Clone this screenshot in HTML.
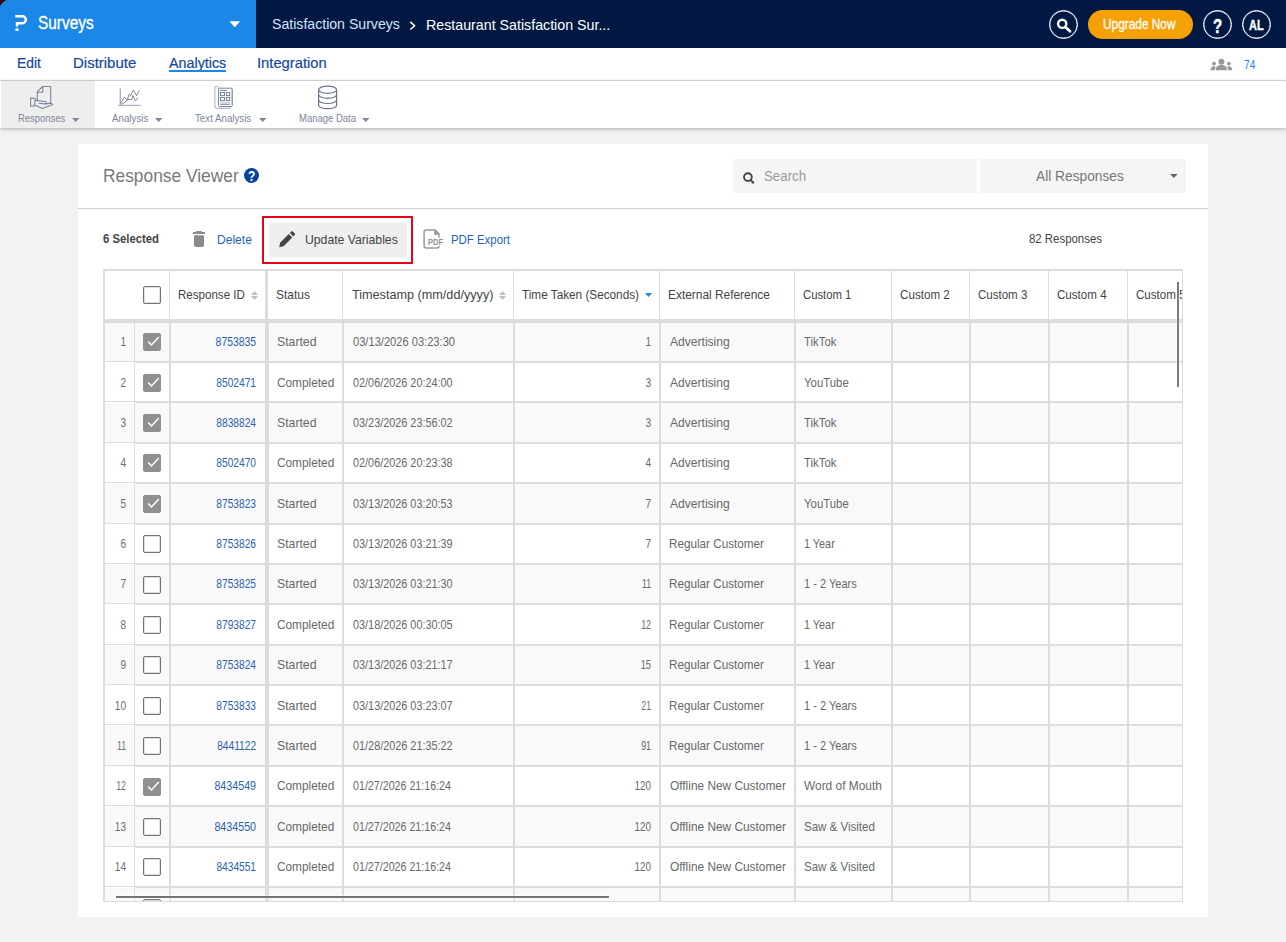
<!DOCTYPE html>
<html lang="en"><head><meta charset="utf-8"><title>Response Viewer - Surveys</title>
<style>
*{box-sizing:border-box;margin:0;padding:0}
html{background:#2b0716}
body{width:1286px;height:942px;overflow:hidden;position:relative;background:#f2f2f2;font-family:"Liberation Sans",sans-serif;font-size:13px;color:#444;border-top-left-radius:9px}
.t{position:absolute;white-space:nowrap;line-height:normal;transform-origin:0 50%;display:block}
.abs{position:absolute}
#nav{position:absolute;left:0;top:0;width:1286px;height:48px;background:#011842;border-top-left-radius:9px}
#brand{position:absolute;left:0;top:0;width:256px;height:48px;background:#1b87e6;border-top-left-radius:9px}
.circ{position:absolute;top:10px;width:29px;height:29px;border:1px solid #fff;border-radius:50%;box-shadow:inset 0 0 0 .4px rgba(255,255,255,.9)}
#upg{position:absolute;left:1088px;top:10px;width:105px;height:29px;border-radius:15px;background:#f5a105}
#tabs{position:absolute;left:0;top:48px;width:1286px;height:33px;background:#fff;border-bottom:1px solid #dcdcdc}
#tools{position:absolute;left:0;top:81px;width:1286px;height:47px;background:#fff;box-shadow:0 1px 4px rgba(0,0,0,.28)}
#tools .act{position:absolute;left:1px;top:0;width:94px;height:47px;background:#eee}
.caret{position:absolute;width:0;height:0;border-left:4px solid transparent;border-right:4px solid transparent;border-top:4px solid #7b8599}
#card{position:absolute;left:78px;top:144px;width:1130px;height:773px;background:#fff}
#hr{position:absolute;left:78px;top:208px;width:1130px;height:1px;background:#cfcfcf}
#search{position:absolute;left:733px;top:159px;width:244px;height:34px;background:#f5f5f5}
#filter{position:absolute;left:980px;top:159px;width:206px;height:34px;background:#f5f5f5;border-radius:0 4px 4px 0}
#redbox{position:absolute;left:262px;top:216px;width:151px;height:48px;border:2px solid #e3051b}
#updbtn{position:absolute;left:269px;top:223px;width:138px;height:34px;background:#efefef;border-radius:3px}
/* table */
#grid{position:absolute;left:103px;top:269px;width:1080px;height:633px;overflow:hidden;background:#fff;border:2px solid #dcdcdc;border-right-width:1px;border-bottom-width:1px}
#ghead{position:absolute;left:0;top:0;width:1300px;height:52px;border-bottom:4px solid #dcdcdc;background:#fff}
.hc{position:absolute;top:0;height:100%;border-right:1px solid #dcdcdc}
.row{position:absolute;left:0;width:1300px;height:40.385px}
.row.odd .c{background:#f9f9f9}
.c{position:absolute;top:0;height:100%;border-right:2px solid #dcdcdc;border-bottom:2px solid #dcdcdc;border-top:0 solid #dcdcdc;background:#fff;color:#686868;font-size:12.6px}
.c .t{top:50%;margin-top:-6.7px}
.c .r{transform-origin:100% 50%}
.cb{position:absolute;left:143px;width:18px;height:18px;border:1px solid #727272;border-radius:2px;background:#fff;box-shadow:inset 0 0 0 .5px #c4c4c4}
.cb.on{background:#909090;border-color:#909090}
.cb.on{box-shadow:none}
.cb.on svg{position:absolute;left:-1px;top:-1px}
.lnk{color:#2a62ad}
.sort{position:absolute;width:7px;height:9px}
</style></head><body>

<div id="nav"><div id="brand"></div>
<svg class="abs" style="left:12px;top:12px" width="20" height="22" viewBox="12 12 20 22"><path d="M15.2 16.3H22.4A3.45 3.45 0 0 1 22.4 23.2H17V26.6" fill="none" stroke="#fff" stroke-width="2.5"/><rect x="15.4" y="28.3" width="3.1" height="2.7" rx=".6" fill="#fff"/></svg>
<svg class="abs" style="left:229px;top:21px" width="12" height="7" viewBox="0 0 12 7"><path d="M0.3 0.2H11.2L5.75 6.2Z" fill="#fff"/></svg>
<svg class="abs" style="left:408px;top:20px" width="10" height="12" viewBox="0 0 10 12"><path d="M2.3 1.9L6.6 5.7L2.3 9.5" fill="none" stroke="#fff" stroke-width="1.5"/></svg>
<div class="circ" style="left:1049px"><svg class="abs" style="left:-1px;top:-1px" width="30" height="30" viewBox="0 0 30 30"><circle cx="13.2" cy="13.8" r="4.1" fill="none" stroke="#fff" stroke-width="2.4"/><path d="M16.3 17L21 21.3" stroke="#fff" stroke-width="2.8" stroke-linecap="round"/></svg></div>
<div id="upg"></div>
<div class="circ" style="left:1203px"></div><div class="circ" style="left:1242px"></div>
<span class="t" style="left:37.90px;top:12.61px;font-size:18px;color:#fff;transform:scaleX(0.8551);-webkit-text-stroke:.35px #fff;">Surveys</span>
<span class="t" style="left:271.90px;top:15.32px;font-size:15px;color:#d3e4fb;transform:scaleX(0.9410);">Satisfaction Surveys</span>
<span class="t" style="left:425.95px;top:16.02px;font-size:15px;color:#fff;transform:scaleX(0.9485);">Restaurant Satisfaction Sur...</span>
<span class="t" style="left:1103.15px;top:15.73px;font-size:14px;color:#fff;transform:scaleX(0.8469);-webkit-text-stroke:.3px #fff;">Upgrade Now</span>
<span class="t" style="left:1213.10px;top:14.29px;font-size:21px;color:#fff;transform:scaleX(0.7167);font-weight:700;-webkit-text-stroke:.5px #fff;">?</span>
<span class="t" style="left:1248.90px;top:16.93px;font-size:14px;color:#fff;transform:scaleX(0.7797);font-weight:700;-webkit-text-stroke:.4px #fff;">AL</span>
</div>
<div id="tabs">
<span class="t" style="left:16.78px;top:6.33px;font-size:15px;color:#15489d;transform:scaleX(0.9229);-webkit-text-stroke:.2px #15489d;">Edit</span>
<span class="t" style="left:73.30px;top:6.33px;font-size:15px;color:#15489d;transform:scaleX(0.9982);-webkit-text-stroke:.2px #15489d;">Distribute</span>
<span class="t" style="left:168.50px;top:6.33px;font-size:15px;color:#15489d;transform:scaleX(0.9543);-webkit-text-stroke:.2px #15489d;">Analytics</span>
<span class="t" style="left:257.22px;top:6.33px;font-size:15px;color:#15489d;transform:scaleX(0.9836);-webkit-text-stroke:.2px #15489d;">Integration</span>
<span class="t" style="left:1243.70px;top:9.14px;font-size:13px;color:#2285ee;transform:scaleX(0.7800);">74</span>
<div class="abs" style="left:168.5px;top:22px;width:57px;height:2px;background:#1b87e6"></div>
<svg class="abs" style="left:1210px;top:10px" width="23" height="13" viewBox="0 0 23 13"><g fill="#999"><circle cx="11.4" cy="3.7" r="3"/><path d="M5.6 12.2c0-3.6 2.4-5.2 5.8-5.2s5.8 1.6 5.8 5.2z"/><circle cx="3.9" cy="5.6" r="1.9"/><path d="M0.6 12.2c0-2.6 1.2-3.9 3.3-3.9c.8 0 1.5.2 2 .6c-.9 1-1.3 2.1-1.3 3.3z"/><circle cx="18.9" cy="5.6" r="1.9"/><path d="M22.2 12.2c0-2.6-1.2-3.9-3.3-3.9c-.8 0-1.5.2-2 .6c.9 1 1.3 2.1 1.3 3.3z"/></g></svg>
</div>
<div id="tools"><div class="act"></div>
<span class="t" style="left:17.70px;top:31.05px;font-size:11px;color:#7b8599;transform:scaleX(0.8572);">Responses</span>
<span class="t" style="left:111.60px;top:31.05px;font-size:11px;color:#7b8599;transform:scaleX(0.8876);">Analysis</span>
<span class="t" style="left:194.80px;top:31.05px;font-size:11px;color:#7b8599;transform:scaleX(0.8842);">Text Analysis</span>
<span class="t" style="left:298.50px;top:31.05px;font-size:11px;color:#7b8599;transform:scaleX(0.8622);">Manage Data</span>
<svg class="abs" style="left:71.50px;top:36.80px" width="7.6" height="3.9" viewBox="0 0 7.6 3.9"><path d="M0 0H7.6L3.8 3.9Z" fill="#808898"/></svg>
<svg class="abs" style="left:154.50px;top:36.80px" width="7.6" height="3.9" viewBox="0 0 7.6 3.9"><path d="M0 0H7.6L3.8 3.9Z" fill="#808898"/></svg>
<svg class="abs" style="left:258.50px;top:36.80px" width="7.6" height="3.9" viewBox="0 0 7.6 3.9"><path d="M0 0H7.6L3.8 3.9Z" fill="#808898"/></svg>
<svg class="abs" style="left:362.30px;top:36.80px" width="7.6" height="3.9" viewBox="0 0 7.6 3.9"><path d="M0 0H7.6L3.8 3.9Z" fill="#808898"/></svg>
<svg class="abs" style="left:29px;top:4px" width="26" height="25" viewBox="0 0 26 25" fill="none" stroke="#7b8599" stroke-width="1.1" stroke-linejoin="round" stroke-linecap="round"><path d="M8.3 15.3V6.9L13.55 1.5H21.2Q21.7 1.5 21.7 2V18.2"/><path d="M13.8 1.8V7.2H8.6"/><path d="M1.6 12.9L6.4 13.8L5.3 20.9L1.6 21.3Z"/><path d="M6.6 15.4L15.9 16.5C17.9 16.9 17.8 19.1 15.5 18.9L10 18.3"/><path d="M6 20.3L13.5 23.6L23.7 19.4L21.9 18.1L16.5 18.9"/></svg>
<svg class="abs" style="left:117px;top:5px" width="26" height="22" viewBox="0 0 26 22" fill="none" stroke="#5f6b7e" stroke-width=".8"><path d="M3.3 2.4V20.2M1.4 19.4H23.8" stroke="#aab2c0" stroke-width="1.4"/><path d="M3.55 17.8L7.4 11L10.2 13.9L12.3 8.1L13.5 9.6L16.4 4L19.5 9.6L22.4 4.4"/><path d="M4.7 18.2L10.2 14.7L11.3 13.1L14.8 13.7L15.8 9.4L18.5 14.9L21 11.7"/></svg>
<svg class="abs" style="left:213px;top:4px" width="22" height="25" viewBox="0 0 22 25" fill="none" stroke="#7b8599" stroke-width="1"><path d="M5.5 4.2V3C5.5 .7 1.9 .7 1.9 3V21.2C1.9 23.4 3.2 23.4 4.5 23.4H16.9V21.6" stroke="#b3bac7" stroke-width="1.1"/><rect x="5.6" y="3.2" width="13.7" height="18.3" rx="1"/><path d="M18.4 4V20.8" stroke="#c5cad4" stroke-width="1"/><path d="M7.2 5.4H13.8"/><rect x="7.5" y="7.5" width="4" height="3.1"/><rect x="13.4" y="7.5" width="3.3" height="3.1"/><rect x="7.5" y="12.4" width="4" height="3.1"/><rect x="13.4" y="12.4" width="3.3" height="3.1"/><path d="M7.2 17.5H16.9" stroke="#d3d7de" stroke-width="1.8"/><path d="M7.2 19.3H16.9"/></svg>
<svg class="abs" style="left:316px;top:3px" width="23" height="27" viewBox="0 0 23 27" fill="none" stroke="#6b7789" stroke-width="1.2"><ellipse cx="11.6" cy="5.7" rx="9" ry="3.6"/><path d="M2.6 5.7V21.3C2.6 23.2 6.6 24.7 11.6 24.7S20.6 23.2 20.6 21.3V5.7"/><path d="M2.6 10.8C2.6 12.7 6.6 14.3 11.6 14.3S20.6 12.7 20.6 10.8"/><path d="M2.6 16C2.6 17.9 6.6 19.5 11.6 19.5S20.6 17.9 20.6 16"/></svg>
</div>
<div id="card"></div><div id="hr"></div><div id="search"></div><div id="filter"></div>
<div class="abs" style="left:243.9px;top:167.7px;width:15.6px;height:15.6px;border-radius:50%;background:#04469b"></div>
<svg class="abs" style="left:742px;top:171px" width="15" height="14" viewBox="0 0 15 14"><circle cx="5.9" cy="6.1" r="3.9" fill="none" stroke="#444" stroke-width="1.9"/><path d="M8.6 9L11.8 12.2" stroke="#444" stroke-width="2.1"/></svg>
<svg class="abs" style="left:1170.30px;top:173.90px" width="7.7" height="4" viewBox="0 0 7.7 4"><path d="M0 0H7.7L3.85 4Z" fill="#666"/></svg>
<div id="redbox"></div><div id="updbtn"></div>
<svg class="abs" style="left:192px;top:230px" width="14" height="18" viewBox="0 0 14 18" fill="#8a8a8a"><path d="M4.6 1h4.8l.7 1H13v1.9H1V2h2.9z"/><path d="M2 5.2h10v9.9c0 1-.8 1.8-1.8 1.8H3.8c-1 0-1.8-.8-1.8-1.8z"/></svg>
<svg class="abs" style="left:278px;top:231px" width="18" height="17" viewBox="0 0 18 17" fill="#444"><path d="M1.2 16.2l.9-4.4 8.7-8.7 3.5 3.5-8.7 8.7z"/><path d="M11.9 2l1.4-1.4c.5-.5 1.2-.5 1.7 0l1.8 1.8c.5.5.5 1.2 0 1.7l-1.4 1.4z"/></svg>
<svg class="abs" style="left:422px;top:228px" width="22" height="22" viewBox="422 228 22 22"><path d="M439 237.6V233.8L435.2 230H426.1a2 2 0 0 0-2 2V246.1a2 2 0 0 0 2 2H437a2 2 0 0 0 2-2V245.8" fill="none" stroke="#999" stroke-width="1.5"/><path d="M434.6 230.2V234.4H438.9Z" fill="#999" stroke="#999" stroke-width=".8"/></svg>
<span class="t" style="left:102.97px;top:165.07px;font-size:18.6px;color:#787878;transform:scaleX(0.9334);">Response Viewer</span>
<span class="t" style="left:248.10px;top:167.79px;font-size:14.6px;color:#fff;transform:scaleX(0.8222);font-weight:700;">?</span>
<span class="t" style="left:763.50px;top:167.12px;font-size:15px;color:#9a9a9a;transform:scaleX(0.8859);">Search</span>
<span class="t" style="left:1036.40px;top:167.12px;font-size:15px;color:#777;transform:scaleX(0.9163);">All Responses</span>
<span class="t" style="left:1029.10px;top:231.24px;font-size:13px;color:#444;transform:scaleX(0.8779);">82 Responses</span>
<span class="t" style="left:103.20px;top:231.24px;font-size:13px;color:#444;transform:scaleX(0.8699);font-weight:700;">6 Selected</span>
<span class="t" style="left:216.87px;top:232.24px;font-size:13px;color:#2464b4;transform:scaleX(0.9271);">Delete</span>
<span class="t" style="left:304.76px;top:232.13px;font-size:13px;color:#444;transform:scaleX(0.9393);">Update Variables</span>
<span class="t" style="left:451.12px;top:232.13px;font-size:13px;color:#2464b4;transform:scaleX(0.8772);">PDF Export</span>
<span class="t" style="left:427.90px;top:236.11px;font-size:9.6px;color:#909090;transform:scaleX(0.7813);font-weight:700;">PDF</span>
<div id="grid">
<div class="row odd" style="top:51.620px">
<div class="c" style="left:0px;width:30px;border-right-width:1px;border-bottom-width:1px;height:calc(100% - 1px);"><span class="t r" style="right:7.70px;color:#6e6e6e;transform:scaleX(0.8000)">1</span></div>
<div class="c" style="left:30px;width:36px;border-right-width:2px;"></div>
<div class="c" style="left:66px;width:98px;border-right-width:4px;"><span class="t r lnk" style="right:8.60px;transform:scaleX(0.8241)">8753835</span></div>
<div class="c" style="left:164px;width:75px;border-right-width:2px;"><span class="t" style="left:7.90px;transform:scaleX(0.9729)">Started</span></div>
<div class="c" style="left:239px;width:171px;border-right-width:2px;"><span class="t" style="left:8.80px;transform:scaleX(0.8828)">03/13/2026 03:23:30</span></div>
<div class="c" style="left:410px;width:146px;border-right-width:2px;"><span class="t r" style="right:7.90px;transform:scaleX(0.8000)">1</span></div>
<div class="c" style="left:556px;width:135px;border-right-width:2px;"><span class="t" style="left:8.80px;transform:scaleX(0.9584)">Advertising</span></div>
<div class="c" style="left:691px;width:97px;border-right-width:2px;"><span class="t" style="left:7.90px;transform:scaleX(0.9011)">TikTok</span></div>
<div class="c" style="left:788px;width:78px;border-right-width:2px;"></div>
<div class="c" style="left:866px;width:79px;border-right-width:2px;"></div>
<div class="c" style="left:945px;width:79px;border-right-width:2px;"></div>
<div class="c" style="left:1024px;width:171px;border-right-width:2px;"></div>
<div class="cb on" style="left:38px;top:10.70px"><svg width="18" height="18" viewBox="0 0 18 18"><path d="M5.1 8.4L8.5 12L15.8 3.9" fill="none" stroke="#fff" stroke-width="1.5"/></svg></div>
</div>
<div class="row" style="top:92.005px">
<div class="c" style="left:0px;width:30px;border-right-width:1px;border-bottom-width:1px;height:calc(100% - 1px);"><span class="t r" style="right:7.70px;color:#6e6e6e;transform:scaleX(0.8000)">2</span></div>
<div class="c" style="left:30px;width:36px;border-right-width:2px;"></div>
<div class="c" style="left:66px;width:98px;border-right-width:4px;"><span class="t r lnk" style="right:8.60px;transform:scaleX(0.8100)">8502471</span></div>
<div class="c" style="left:164px;width:75px;border-right-width:2px;"><span class="t" style="left:7.90px;transform:scaleX(0.9393)">Completed</span></div>
<div class="c" style="left:239px;width:171px;border-right-width:2px;"><span class="t" style="left:8.80px;transform:scaleX(0.8620)">02/06/2026 20:24:00</span></div>
<div class="c" style="left:410px;width:146px;border-right-width:2px;"><span class="t r" style="right:7.90px;transform:scaleX(0.8000)">3</span></div>
<div class="c" style="left:556px;width:135px;border-right-width:2px;"><span class="t" style="left:8.80px;transform:scaleX(0.9584)">Advertising</span></div>
<div class="c" style="left:691px;width:97px;border-right-width:2px;"><span class="t" style="left:7.90px;transform:scaleX(0.9053)">YouTube</span></div>
<div class="c" style="left:788px;width:78px;border-right-width:2px;"></div>
<div class="c" style="left:866px;width:79px;border-right-width:2px;"></div>
<div class="c" style="left:945px;width:79px;border-right-width:2px;"></div>
<div class="c" style="left:1024px;width:171px;border-right-width:2px;"></div>
<div class="cb on" style="left:38px;top:10.70px"><svg width="18" height="18" viewBox="0 0 18 18"><path d="M5.1 8.4L8.5 12L15.8 3.9" fill="none" stroke="#fff" stroke-width="1.5"/></svg></div>
</div>
<div class="row odd" style="top:132.390px">
<div class="c" style="left:0px;width:30px;border-right-width:1px;border-bottom-width:1px;height:calc(100% - 1px);"><span class="t r" style="right:7.70px;color:#6e6e6e;transform:scaleX(0.8000)">3</span></div>
<div class="c" style="left:30px;width:36px;border-right-width:2px;"></div>
<div class="c" style="left:66px;width:98px;border-right-width:4px;"><span class="t r lnk" style="right:8.60px;transform:scaleX(0.8100)">8838824</span></div>
<div class="c" style="left:164px;width:75px;border-right-width:2px;"><span class="t" style="left:7.90px;transform:scaleX(0.9729)">Started</span></div>
<div class="c" style="left:239px;width:171px;border-right-width:2px;"><span class="t" style="left:8.80px;transform:scaleX(0.8620)">03/23/2026 23:56:02</span></div>
<div class="c" style="left:410px;width:146px;border-right-width:2px;"><span class="t r" style="right:7.90px;transform:scaleX(0.8000)">3</span></div>
<div class="c" style="left:556px;width:135px;border-right-width:2px;"><span class="t" style="left:8.80px;transform:scaleX(0.9584)">Advertising</span></div>
<div class="c" style="left:691px;width:97px;border-right-width:2px;"><span class="t" style="left:7.90px;transform:scaleX(0.9011)">TikTok</span></div>
<div class="c" style="left:788px;width:78px;border-right-width:2px;"></div>
<div class="c" style="left:866px;width:79px;border-right-width:2px;"></div>
<div class="c" style="left:945px;width:79px;border-right-width:2px;"></div>
<div class="c" style="left:1024px;width:171px;border-right-width:2px;"></div>
<div class="cb on" style="left:38px;top:10.70px"><svg width="18" height="18" viewBox="0 0 18 18"><path d="M5.1 8.4L8.5 12L15.8 3.9" fill="none" stroke="#fff" stroke-width="1.5"/></svg></div>
</div>
<div class="row" style="top:172.775px">
<div class="c" style="left:0px;width:30px;border-right-width:1px;border-bottom-width:1px;height:calc(100% - 1px);"><span class="t r" style="right:7.70px;color:#6e6e6e;transform:scaleX(0.8000)">4</span></div>
<div class="c" style="left:30px;width:36px;border-right-width:2px;"></div>
<div class="c" style="left:66px;width:98px;border-right-width:4px;"><span class="t r lnk" style="right:8.60px;transform:scaleX(0.8100)">8502470</span></div>
<div class="c" style="left:164px;width:75px;border-right-width:2px;"><span class="t" style="left:7.90px;transform:scaleX(0.9393)">Completed</span></div>
<div class="c" style="left:239px;width:171px;border-right-width:2px;"><span class="t" style="left:8.80px;transform:scaleX(0.8620)">02/06/2026 20:23:38</span></div>
<div class="c" style="left:410px;width:146px;border-right-width:2px;"><span class="t r" style="right:7.90px;transform:scaleX(0.8000)">4</span></div>
<div class="c" style="left:556px;width:135px;border-right-width:2px;"><span class="t" style="left:8.80px;transform:scaleX(0.9584)">Advertising</span></div>
<div class="c" style="left:691px;width:97px;border-right-width:2px;"><span class="t" style="left:7.90px;transform:scaleX(0.9011)">TikTok</span></div>
<div class="c" style="left:788px;width:78px;border-right-width:2px;"></div>
<div class="c" style="left:866px;width:79px;border-right-width:2px;"></div>
<div class="c" style="left:945px;width:79px;border-right-width:2px;"></div>
<div class="c" style="left:1024px;width:171px;border-right-width:2px;"></div>
<div class="cb on" style="left:38px;top:10.70px"><svg width="18" height="18" viewBox="0 0 18 18"><path d="M5.1 8.4L8.5 12L15.8 3.9" fill="none" stroke="#fff" stroke-width="1.5"/></svg></div>
</div>
<div class="row odd" style="top:213.160px">
<div class="c" style="left:0px;width:30px;border-right-width:1px;border-bottom-width:1px;height:calc(100% - 1px);"><span class="t r" style="right:7.70px;color:#6e6e6e;transform:scaleX(0.8000)">5</span></div>
<div class="c" style="left:30px;width:36px;border-right-width:2px;"></div>
<div class="c" style="left:66px;width:98px;border-right-width:4px;"><span class="t r lnk" style="right:8.60px;transform:scaleX(0.8100)">8753823</span></div>
<div class="c" style="left:164px;width:75px;border-right-width:2px;"><span class="t" style="left:7.90px;transform:scaleX(0.9729)">Started</span></div>
<div class="c" style="left:239px;width:171px;border-right-width:2px;"><span class="t" style="left:8.80px;transform:scaleX(0.8620)">03/13/2026 03:20:53</span></div>
<div class="c" style="left:410px;width:146px;border-right-width:2px;"><span class="t r" style="right:7.90px;transform:scaleX(0.8000)">7</span></div>
<div class="c" style="left:556px;width:135px;border-right-width:2px;"><span class="t" style="left:8.80px;transform:scaleX(0.9584)">Advertising</span></div>
<div class="c" style="left:691px;width:97px;border-right-width:2px;"><span class="t" style="left:7.90px;transform:scaleX(0.9053)">YouTube</span></div>
<div class="c" style="left:788px;width:78px;border-right-width:2px;"></div>
<div class="c" style="left:866px;width:79px;border-right-width:2px;"></div>
<div class="c" style="left:945px;width:79px;border-right-width:2px;"></div>
<div class="c" style="left:1024px;width:171px;border-right-width:2px;"></div>
<div class="cb on" style="left:38px;top:10.70px"><svg width="18" height="18" viewBox="0 0 18 18"><path d="M5.1 8.4L8.5 12L15.8 3.9" fill="none" stroke="#fff" stroke-width="1.5"/></svg></div>
</div>
<div class="row" style="top:253.545px">
<div class="c" style="left:0px;width:30px;border-right-width:1px;border-bottom-width:1px;height:calc(100% - 1px);"><span class="t r" style="right:7.70px;color:#6e6e6e;transform:scaleX(0.8000)">6</span></div>
<div class="c" style="left:30px;width:36px;border-right-width:2px;"></div>
<div class="c" style="left:66px;width:98px;border-right-width:4px;"><span class="t r lnk" style="right:8.60px;transform:scaleX(0.8100)">8753826</span></div>
<div class="c" style="left:164px;width:75px;border-right-width:2px;"><span class="t" style="left:7.90px;transform:scaleX(0.9729)">Started</span></div>
<div class="c" style="left:239px;width:171px;border-right-width:2px;"><span class="t" style="left:8.80px;transform:scaleX(0.8620)">03/13/2026 03:21:39</span></div>
<div class="c" style="left:410px;width:146px;border-right-width:2px;"><span class="t r" style="right:7.90px;transform:scaleX(0.8000)">7</span></div>
<div class="c" style="left:556px;width:135px;border-right-width:2px;"><span class="t" style="left:7.87px;transform:scaleX(0.9288)">Regular Customer</span></div>
<div class="c" style="left:691px;width:97px;border-right-width:2px;"><span class="t" style="left:7.90px;transform:scaleX(0.8614)">1 Year</span></div>
<div class="c" style="left:788px;width:78px;border-right-width:2px;"></div>
<div class="c" style="left:866px;width:79px;border-right-width:2px;"></div>
<div class="c" style="left:945px;width:79px;border-right-width:2px;"></div>
<div class="c" style="left:1024px;width:171px;border-right-width:2px;"></div>
<div class="cb" style="left:38px;top:10.70px"></div>
</div>
<div class="row odd" style="top:293.930px">
<div class="c" style="left:0px;width:30px;border-right-width:1px;border-bottom-width:1px;height:calc(100% - 1px);"><span class="t r" style="right:7.70px;color:#6e6e6e;transform:scaleX(0.8000)">7</span></div>
<div class="c" style="left:30px;width:36px;border-right-width:2px;"></div>
<div class="c" style="left:66px;width:98px;border-right-width:4px;"><span class="t r lnk" style="right:8.60px;transform:scaleX(0.8100)">8753825</span></div>
<div class="c" style="left:164px;width:75px;border-right-width:2px;"><span class="t" style="left:7.90px;transform:scaleX(0.9729)">Started</span></div>
<div class="c" style="left:239px;width:171px;border-right-width:2px;"><span class="t" style="left:8.80px;transform:scaleX(0.8620)">03/13/2026 03:21:30</span></div>
<div class="c" style="left:410px;width:146px;border-right-width:2px;"><span class="t r" style="right:7.90px;transform:scaleX(0.6887)">11</span></div>
<div class="c" style="left:556px;width:135px;border-right-width:2px;"><span class="t" style="left:7.87px;transform:scaleX(0.9288)">Regular Customer</span></div>
<div class="c" style="left:691px;width:97px;border-right-width:2px;"><span class="t" style="left:7.90px;transform:scaleX(0.8762)">1 - 2 Years</span></div>
<div class="c" style="left:788px;width:78px;border-right-width:2px;"></div>
<div class="c" style="left:866px;width:79px;border-right-width:2px;"></div>
<div class="c" style="left:945px;width:79px;border-right-width:2px;"></div>
<div class="c" style="left:1024px;width:171px;border-right-width:2px;"></div>
<div class="cb" style="left:38px;top:10.70px"></div>
</div>
<div class="row" style="top:334.315px">
<div class="c" style="left:0px;width:30px;border-right-width:1px;border-bottom-width:1px;height:calc(100% - 1px);"><span class="t r" style="right:7.70px;color:#6e6e6e;transform:scaleX(0.8000)">8</span></div>
<div class="c" style="left:30px;width:36px;border-right-width:2px;"></div>
<div class="c" style="left:66px;width:98px;border-right-width:4px;"><span class="t r lnk" style="right:8.60px;transform:scaleX(0.8100)">8793827</span></div>
<div class="c" style="left:164px;width:75px;border-right-width:2px;"><span class="t" style="left:7.90px;transform:scaleX(0.9393)">Completed</span></div>
<div class="c" style="left:239px;width:171px;border-right-width:2px;"><span class="t" style="left:8.80px;transform:scaleX(0.8620)">03/18/2026 00:30:05</span></div>
<div class="c" style="left:410px;width:146px;border-right-width:2px;"><span class="t r" style="right:7.90px;transform:scaleX(0.6998)">12</span></div>
<div class="c" style="left:556px;width:135px;border-right-width:2px;"><span class="t" style="left:7.87px;transform:scaleX(0.9288)">Regular Customer</span></div>
<div class="c" style="left:691px;width:97px;border-right-width:2px;"><span class="t" style="left:7.90px;transform:scaleX(0.8614)">1 Year</span></div>
<div class="c" style="left:788px;width:78px;border-right-width:2px;"></div>
<div class="c" style="left:866px;width:79px;border-right-width:2px;"></div>
<div class="c" style="left:945px;width:79px;border-right-width:2px;"></div>
<div class="c" style="left:1024px;width:171px;border-right-width:2px;"></div>
<div class="cb" style="left:38px;top:10.70px"></div>
</div>
<div class="row odd" style="top:374.700px">
<div class="c" style="left:0px;width:30px;border-right-width:1px;border-bottom-width:1px;height:calc(100% - 1px);"><span class="t r" style="right:7.70px;color:#6e6e6e;transform:scaleX(0.8000)">9</span></div>
<div class="c" style="left:30px;width:36px;border-right-width:2px;"></div>
<div class="c" style="left:66px;width:98px;border-right-width:4px;"><span class="t r lnk" style="right:8.60px;transform:scaleX(0.8100)">8753824</span></div>
<div class="c" style="left:164px;width:75px;border-right-width:2px;"><span class="t" style="left:7.90px;transform:scaleX(0.9729)">Started</span></div>
<div class="c" style="left:239px;width:171px;border-right-width:2px;"><span class="t" style="left:8.80px;transform:scaleX(0.8620)">03/13/2026 03:21:17</span></div>
<div class="c" style="left:410px;width:146px;border-right-width:2px;"><span class="t r" style="right:7.90px;transform:scaleX(0.7355)">15</span></div>
<div class="c" style="left:556px;width:135px;border-right-width:2px;"><span class="t" style="left:7.87px;transform:scaleX(0.9288)">Regular Customer</span></div>
<div class="c" style="left:691px;width:97px;border-right-width:2px;"><span class="t" style="left:7.90px;transform:scaleX(0.8614)">1 Year</span></div>
<div class="c" style="left:788px;width:78px;border-right-width:2px;"></div>
<div class="c" style="left:866px;width:79px;border-right-width:2px;"></div>
<div class="c" style="left:945px;width:79px;border-right-width:2px;"></div>
<div class="c" style="left:1024px;width:171px;border-right-width:2px;"></div>
<div class="cb" style="left:38px;top:10.70px"></div>
</div>
<div class="row" style="top:415.085px">
<div class="c" style="left:0px;width:30px;border-right-width:1px;border-bottom-width:1px;height:calc(100% - 1px);"><span class="t r" style="right:7.70px;color:#6e6e6e;transform:scaleX(0.8000)">10</span></div>
<div class="c" style="left:30px;width:36px;border-right-width:2px;"></div>
<div class="c" style="left:66px;width:98px;border-right-width:4px;"><span class="t r lnk" style="right:8.60px;transform:scaleX(0.8100)">8753833</span></div>
<div class="c" style="left:164px;width:75px;border-right-width:2px;"><span class="t" style="left:7.90px;transform:scaleX(0.9729)">Started</span></div>
<div class="c" style="left:239px;width:171px;border-right-width:2px;"><span class="t" style="left:8.80px;transform:scaleX(0.8620)">03/13/2026 03:23:07</span></div>
<div class="c" style="left:410px;width:146px;border-right-width:2px;"><span class="t r" style="right:7.90px;transform:scaleX(0.6927)">21</span></div>
<div class="c" style="left:556px;width:135px;border-right-width:2px;"><span class="t" style="left:7.87px;transform:scaleX(0.9288)">Regular Customer</span></div>
<div class="c" style="left:691px;width:97px;border-right-width:2px;"><span class="t" style="left:7.90px;transform:scaleX(0.8762)">1 - 2 Years</span></div>
<div class="c" style="left:788px;width:78px;border-right-width:2px;"></div>
<div class="c" style="left:866px;width:79px;border-right-width:2px;"></div>
<div class="c" style="left:945px;width:79px;border-right-width:2px;"></div>
<div class="c" style="left:1024px;width:171px;border-right-width:2px;"></div>
<div class="cb" style="left:38px;top:10.70px"></div>
</div>
<div class="row odd" style="top:455.470px">
<div class="c" style="left:0px;width:30px;border-right-width:1px;border-bottom-width:1px;height:calc(100% - 1px);"><span class="t r" style="right:7.70px;color:#6e6e6e;transform:scaleX(0.6887)">11</span></div>
<div class="c" style="left:30px;width:36px;border-right-width:2px;"></div>
<div class="c" style="left:66px;width:98px;border-right-width:4px;"><span class="t r lnk" style="right:8.60px;transform:scaleX(0.8100)">8441122</span></div>
<div class="c" style="left:164px;width:75px;border-right-width:2px;"><span class="t" style="left:7.90px;transform:scaleX(0.9729)">Started</span></div>
<div class="c" style="left:239px;width:171px;border-right-width:2px;"><span class="t" style="left:8.80px;transform:scaleX(0.8620)">01/28/2026 21:35:22</span></div>
<div class="c" style="left:410px;width:146px;border-right-width:2px;"><span class="t r" style="right:7.90px;transform:scaleX(0.6998)">91</span></div>
<div class="c" style="left:556px;width:135px;border-right-width:2px;"><span class="t" style="left:7.87px;transform:scaleX(0.9288)">Regular Customer</span></div>
<div class="c" style="left:691px;width:97px;border-right-width:2px;"><span class="t" style="left:7.90px;transform:scaleX(0.8762)">1 - 2 Years</span></div>
<div class="c" style="left:788px;width:78px;border-right-width:2px;"></div>
<div class="c" style="left:866px;width:79px;border-right-width:2px;"></div>
<div class="c" style="left:945px;width:79px;border-right-width:2px;"></div>
<div class="c" style="left:1024px;width:171px;border-right-width:2px;"></div>
<div class="cb" style="left:38px;top:10.70px"></div>
</div>
<div class="row" style="top:495.855px">
<div class="c" style="left:0px;width:30px;border-right-width:1px;border-bottom-width:1px;height:calc(100% - 1px);"><span class="t r" style="right:7.70px;color:#6e6e6e;transform:scaleX(0.6998)">12</span></div>
<div class="c" style="left:30px;width:36px;border-right-width:2px;"></div>
<div class="c" style="left:66px;width:98px;border-right-width:4px;"><span class="t r lnk" style="right:8.60px;transform:scaleX(0.8486)">8434549</span></div>
<div class="c" style="left:164px;width:75px;border-right-width:2px;"><span class="t" style="left:7.90px;transform:scaleX(0.9393)">Completed</span></div>
<div class="c" style="left:239px;width:171px;border-right-width:2px;"><span class="t" style="left:8.80px;transform:scaleX(0.8481)">01/27/2026 21:16:24</span></div>
<div class="c" style="left:410px;width:146px;border-right-width:2px;"><span class="t r" style="right:7.90px;transform:scaleX(0.7807)">120</span></div>
<div class="c" style="left:556px;width:135px;border-right-width:2px;"><span class="t" style="left:8.80px;transform:scaleX(0.9425)">Offline New Customer</span></div>
<div class="c" style="left:691px;width:97px;border-right-width:2px;"><span class="t" style="left:7.90px;transform:scaleX(0.9446)">Word of Mouth</span></div>
<div class="c" style="left:788px;width:78px;border-right-width:2px;"></div>
<div class="c" style="left:866px;width:79px;border-right-width:2px;"></div>
<div class="c" style="left:945px;width:79px;border-right-width:2px;"></div>
<div class="c" style="left:1024px;width:171px;border-right-width:2px;"></div>
<div class="cb on" style="left:38px;top:10.70px"><svg width="18" height="18" viewBox="0 0 18 18"><path d="M5.1 8.4L8.5 12L15.8 3.9" fill="none" stroke="#fff" stroke-width="1.5"/></svg></div>
</div>
<div class="row odd" style="top:536.240px">
<div class="c" style="left:0px;width:30px;border-right-width:1px;border-bottom-width:1px;height:calc(100% - 1px);"><span class="t r" style="right:7.70px;color:#6e6e6e;transform:scaleX(0.8000)">13</span></div>
<div class="c" style="left:30px;width:36px;border-right-width:2px;"></div>
<div class="c" style="left:66px;width:98px;border-right-width:4px;"><span class="t r lnk" style="right:8.60px;transform:scaleX(0.8486)">8434550</span></div>
<div class="c" style="left:164px;width:75px;border-right-width:2px;"><span class="t" style="left:7.90px;transform:scaleX(0.9393)">Completed</span></div>
<div class="c" style="left:239px;width:171px;border-right-width:2px;"><span class="t" style="left:8.80px;transform:scaleX(0.8481)">01/27/2026 21:16:24</span></div>
<div class="c" style="left:410px;width:146px;border-right-width:2px;"><span class="t r" style="right:7.90px;transform:scaleX(0.7807)">120</span></div>
<div class="c" style="left:556px;width:135px;border-right-width:2px;"><span class="t" style="left:8.80px;transform:scaleX(0.9425)">Offline New Customer</span></div>
<div class="c" style="left:691px;width:97px;border-right-width:2px;"><span class="t" style="left:7.90px;transform:scaleX(0.9150)">Saw &amp; Visited</span></div>
<div class="c" style="left:788px;width:78px;border-right-width:2px;"></div>
<div class="c" style="left:866px;width:79px;border-right-width:2px;"></div>
<div class="c" style="left:945px;width:79px;border-right-width:2px;"></div>
<div class="c" style="left:1024px;width:171px;border-right-width:2px;"></div>
<div class="cb" style="left:38px;top:10.70px"></div>
</div>
<div class="row" style="top:576.625px">
<div class="c" style="left:0px;width:30px;border-right-width:1px;border-bottom-width:1px;height:calc(100% - 1px);"><span class="t r" style="right:7.70px;color:#6e6e6e;transform:scaleX(0.8000)">14</span></div>
<div class="c" style="left:30px;width:36px;border-right-width:2px;"></div>
<div class="c" style="left:66px;width:98px;border-right-width:4px;"><span class="t r lnk" style="right:8.60px;transform:scaleX(0.8078)">8434551</span></div>
<div class="c" style="left:164px;width:75px;border-right-width:2px;"><span class="t" style="left:7.90px;transform:scaleX(0.9393)">Completed</span></div>
<div class="c" style="left:239px;width:171px;border-right-width:2px;"><span class="t" style="left:8.80px;transform:scaleX(0.8481)">01/27/2026 21:16:24</span></div>
<div class="c" style="left:410px;width:146px;border-right-width:2px;"><span class="t r" style="right:7.90px;transform:scaleX(0.7807)">120</span></div>
<div class="c" style="left:556px;width:135px;border-right-width:2px;"><span class="t" style="left:8.80px;transform:scaleX(0.9425)">Offline New Customer</span></div>
<div class="c" style="left:691px;width:97px;border-right-width:2px;"><span class="t" style="left:7.90px;transform:scaleX(0.9150)">Saw &amp; Visited</span></div>
<div class="c" style="left:788px;width:78px;border-right-width:2px;"></div>
<div class="c" style="left:866px;width:79px;border-right-width:2px;"></div>
<div class="c" style="left:945px;width:79px;border-right-width:2px;"></div>
<div class="c" style="left:1024px;width:171px;border-right-width:2px;"></div>
<div class="cb" style="left:38px;top:10.70px"></div>
</div>
<div class="row odd" style="top:617.010px">
<div class="c" style="left:0px;width:30px;border-right-width:1px;border-bottom-width:1px;height:calc(100% - 1px);"></div>
<div class="c" style="left:30px;width:36px;border-right-width:2px;"></div>
<div class="c" style="left:66px;width:98px;border-right-width:4px;"></div>
<div class="c" style="left:164px;width:75px;border-right-width:2px;"></div>
<div class="c" style="left:239px;width:171px;border-right-width:2px;"></div>
<div class="c" style="left:410px;width:146px;border-right-width:2px;"></div>
<div class="c" style="left:556px;width:135px;border-right-width:2px;"></div>
<div class="c" style="left:691px;width:97px;border-right-width:2px;"></div>
<div class="c" style="left:788px;width:78px;border-right-width:2px;"></div>
<div class="c" style="left:866px;width:79px;border-right-width:2px;"></div>
<div class="c" style="left:945px;width:79px;border-right-width:2px;"></div>
<div class="c" style="left:1024px;width:171px;border-right-width:2px;"></div>
<div class="cb" style="left:38px;top:10.70px"></div>
</div>
<div id="ghead">
<div class="hc" style="left:0px;width:65px;border-right-width:1px"><div class="cb" style="left:38px;top:15px"></div></div>
<div class="hc" style="left:65px;width:98px;border-right-width:3px"><span class="t" style="left:7.51px;top:16.24px;font-size:13px;color:#444;transform:scaleX(0.8894);">Response ID</span><svg class="sort" style="left:81px;top:20px" viewBox="0 0 7 9"><path d="M0 4L3.5 0L7 4ZM0 5H7L3.5 9Z" fill="#c2c2c2"/></svg></div>
<div class="hc" style="left:163px;width:75px;border-right-width:1px"><span class="t" style="left:7.90px;top:16.24px;font-size:13px;color:#444;transform:scaleX(0.9209);">Status</span></div>
<div class="hc" style="left:238px;width:171px;border-right-width:1px"><span class="t" style="left:8.80px;top:16.24px;font-size:13px;color:#444;transform:scaleX(0.9725);">Timestamp (mm/dd/yyyy)</span><svg class="sort" style="left:156px;top:20px" viewBox="0 0 7 9"><path d="M0 4L3.5 0L7 4ZM0 5H7L3.5 9Z" fill="#c2c2c2"/></svg></div>
<div class="hc" style="left:409px;width:146px;border-right-width:1px"><span class="t" style="left:8.10px;top:16.24px;font-size:13px;color:#444;transform:scaleX(0.9045);">Time Taken (Seconds)</span><svg class="abs" style="left:131.00px;top:22.30px" width="7" height="4" viewBox="0 0 7 4"><path d="M0 0H7L3.5 4Z" fill="#1b8fe0"/></svg></div>
<div class="hc" style="left:555px;width:135px;border-right-width:1px"><span class="t" style="left:8.08px;top:16.24px;font-size:13px;color:#444;transform:scaleX(0.9150);">External Reference</span></div>
<div class="hc" style="left:690px;width:97px;border-right-width:1px"><span class="t" style="left:8.10px;top:16.24px;font-size:13px;color:#444;transform:scaleX(0.8700);">Custom 1</span></div>
<div class="hc" style="left:787px;width:78px;border-right-width:1px"><span class="t" style="left:7.80px;top:16.24px;font-size:13px;color:#444;transform:scaleX(0.8953);">Custom 2</span></div>
<div class="hc" style="left:865px;width:79px;border-right-width:1px"><span class="t" style="left:8.40px;top:16.24px;font-size:13px;color:#444;transform:scaleX(0.8863);">Custom 3</span></div>
<div class="hc" style="left:944px;width:79px;border-right-width:1px"><span class="t" style="left:8.20px;top:16.24px;font-size:13px;color:#444;transform:scaleX(0.8917);">Custom 4</span></div>
<div class="hc" style="left:1023px;width:172px;border-right-width:0px"><span class="t" style="left:8.30px;top:16.24px;font-size:13px;color:#444;transform:scaleX(0.8899);">Custom 5</span></div>
</div>
<div class="abs" style="left:1072px;top:11px;width:2px;height:105px;background:#7a7a7a;box-shadow:0 0 0 1px rgba(255,255,255,.4)"></div>
<div class="abs" style="left:11px;top:625px;width:493px;height:2px;background:#747474;box-shadow:0 0 0 1px rgba(255,255,255,.6)"></div>
</div>
</body></html>
